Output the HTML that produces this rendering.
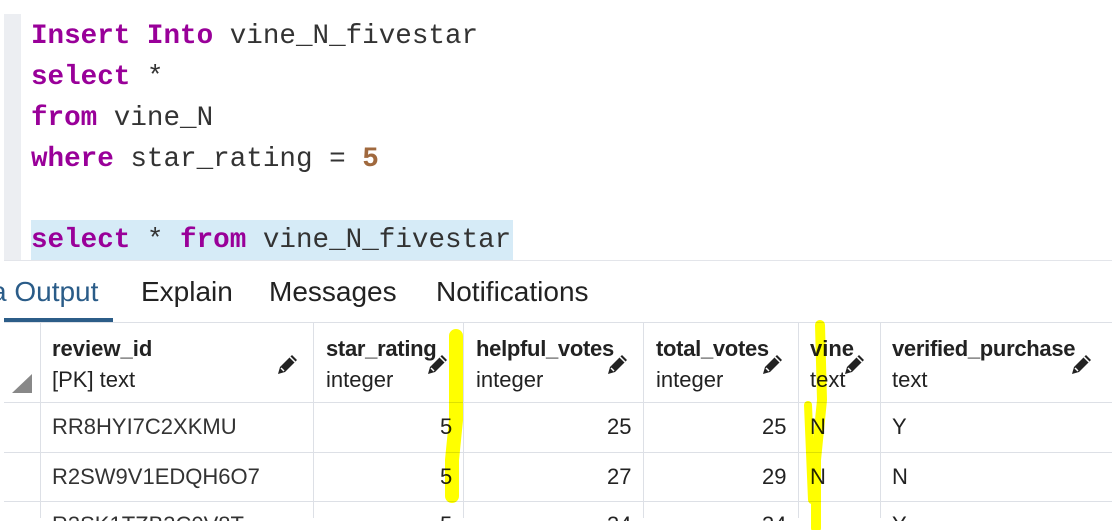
<!DOCTYPE html><html><head><style>
body{margin:0;width:1112px;height:530px;background:#fff;position:relative;overflow:hidden;font-family:"Liberation Sans",sans-serif}
.gut{position:absolute;left:4px;top:14px;width:17px;height:246px;background:#eceef2}
.code{position:absolute;left:31px;font-family:"Liberation Mono",monospace;font-size:27.6px;color:#333;white-space:pre;line-height:30px}
.k{color:#990099;font-weight:bold}.n{color:#a0693e;font-weight:bold}
.hl{position:absolute;left:31px;top:220px;width:482px;height:40px;background:#d6ebf7}
.tab{position:absolute;top:276px;font-size:28px;color:#222}
.a{position:absolute;white-space:nowrap;font-size:22px;color:#222}
.c{position:absolute;top:323px;height:195px;width:1px;background:#dde0e6}
.r{position:absolute;left:4px;width:1108px;height:1px;background:#dde0e6}
.pen{position:absolute}
</style></head><body>
<div class="gut"></div>
<div class="hl"></div>
<div class="code" style="top:22px"><span class="k">Insert Into</span> vine_N_fivestar</div>
<div class="code" style="top:63px"><span class="k">select</span> *</div>
<div class="code" style="top:104px"><span class="k">from</span> vine_N</div>
<div class="code" style="top:145px"><span class="k">where</span> star_rating = <span class="n">5</span></div>
<div class="code" style="top:226px"><span class="k">select</span> * <span class="k">from</span> vine_N_fivestar</div>
<div style="position:absolute;left:4px;top:260px;width:1108px;height:1px;background:#e3e5ea"></div>
<div class="tab" style="left:-9px;color:#2a5c88">a Output</div>
<div class="tab" style="left:141px">Explain</div>
<div class="tab" style="left:269px">Messages</div>
<div class="tab" style="left:436px">Notifications</div>
<div style="position:absolute;left:4px;top:318px;width:109px;height:4px;background:#2c5d88"></div>
<div class="r" style="top:322px"></div><div class="r" style="top:402px"></div><div class="r" style="top:452px"></div><div class="r" style="top:501px"></div>
<div class="c" style="left:40px"></div><div class="c" style="left:313px"></div><div class="c" style="left:463px"></div><div class="c" style="left:643px"></div><div class="c" style="left:798px"></div><div class="c" style="left:880px"></div>
<svg style="position:absolute;left:12px;top:374px" width="20" height="20"><polygon points="20,0 20,19 0,19" fill="#888"/></svg>
<div class="a" style="left:52px;top:336px;font-weight:bold">review_id</div><div class="a" style="left:52px;top:367px">[PK] text</div>
<div class="a" style="left:326px;top:336px;font-weight:bold;letter-spacing:-0.3px">star_rating</div><div class="a" style="left:326px;top:367px">integer</div>
<div class="a" style="left:476px;top:336px;font-weight:bold;letter-spacing:-0.3px">helpful_votes</div><div class="a" style="left:476px;top:367px">integer</div>
<div class="a" style="left:656px;top:336px;font-weight:bold;letter-spacing:-0.3px">total_votes</div><div class="a" style="left:656px;top:367px">integer</div>
<div class="a" style="left:810px;top:336px;font-weight:bold">vine</div><div class="a" style="left:810px;top:367px">text</div>
<div class="a" style="left:892px;top:336px;font-weight:bold;letter-spacing:-0.3px">verified_purchase</div><div class="a" style="left:892px;top:367px">text</div>
<svg width="0" height="0" style="position:absolute"><defs><g id="p"><path d="M2 22 L4 15 L16 3 L21 8 L9 20 Z" fill="#222"/><path d="M5 16 L8 19" stroke="#fff" stroke-width="1.5"/><path d="M14 5 L19 10" stroke="#fff" stroke-width="1.5"/></g></defs></svg>
<svg class="pen" style="left:276px;top:352px" width="24" height="24"><use href="#p"/></svg>
<svg class="pen" style="left:426px;top:352px" width="24" height="24"><use href="#p"/></svg>
<svg class="pen" style="left:606px;top:352px" width="24" height="24"><use href="#p"/></svg>
<svg class="pen" style="left:761px;top:352px" width="24" height="24"><use href="#p"/></svg>
<svg class="pen" style="left:843px;top:352px" width="24" height="24"><use href="#p"/></svg>
<svg class="pen" style="left:1070px;top:352px" width="24" height="24"><use href="#p"/></svg>
<div class="a" style="left:52px;top:414px;color:#333">RR8HYI7C2XKMU</div>
<div class="a" style="left:440px;top:414px">5</div><div class="a" style="left:607px;top:414px">25</div><div class="a" style="left:762px;top:414px">25</div><div class="a" style="left:810px;top:414px">N</div><div class="a" style="left:892px;top:414px">Y</div>
<div class="a" style="left:52px;top:464px;color:#333">R2SW9V1EDQH6O7</div>
<div class="a" style="left:440px;top:464px">5</div><div class="a" style="left:607px;top:464px">27</div><div class="a" style="left:762px;top:464px">29</div><div class="a" style="left:810px;top:464px">N</div><div class="a" style="left:892px;top:464px">N</div>
<div style="position:absolute;left:0;top:502px;width:1112px;height:19px;overflow:hidden">
<div class="a" style="left:52px;top:10px;color:#333">R3SK1TZB3C0V8T</div><div class="a" style="left:440px;top:10px">5</div><div class="a" style="left:607px;top:10px">34</div><div class="a" style="left:762px;top:10px">34</div><div class="a" style="left:892px;top:10px">Y</div></div>
<svg style="position:absolute;left:0;top:0;mix-blend-mode:multiply" width="1112" height="530"><g stroke="#ffff00" fill="none" stroke-linecap="round">
<path d="M456 336 L456 420 L452 460 L452 496" stroke-width="14"/>
<path d="M820 325 L822 400 L816 460 L816 528" stroke-width="10"/>
<path d="M808 405 L812 500" stroke-width="8"/></g></svg>
</body></html>
